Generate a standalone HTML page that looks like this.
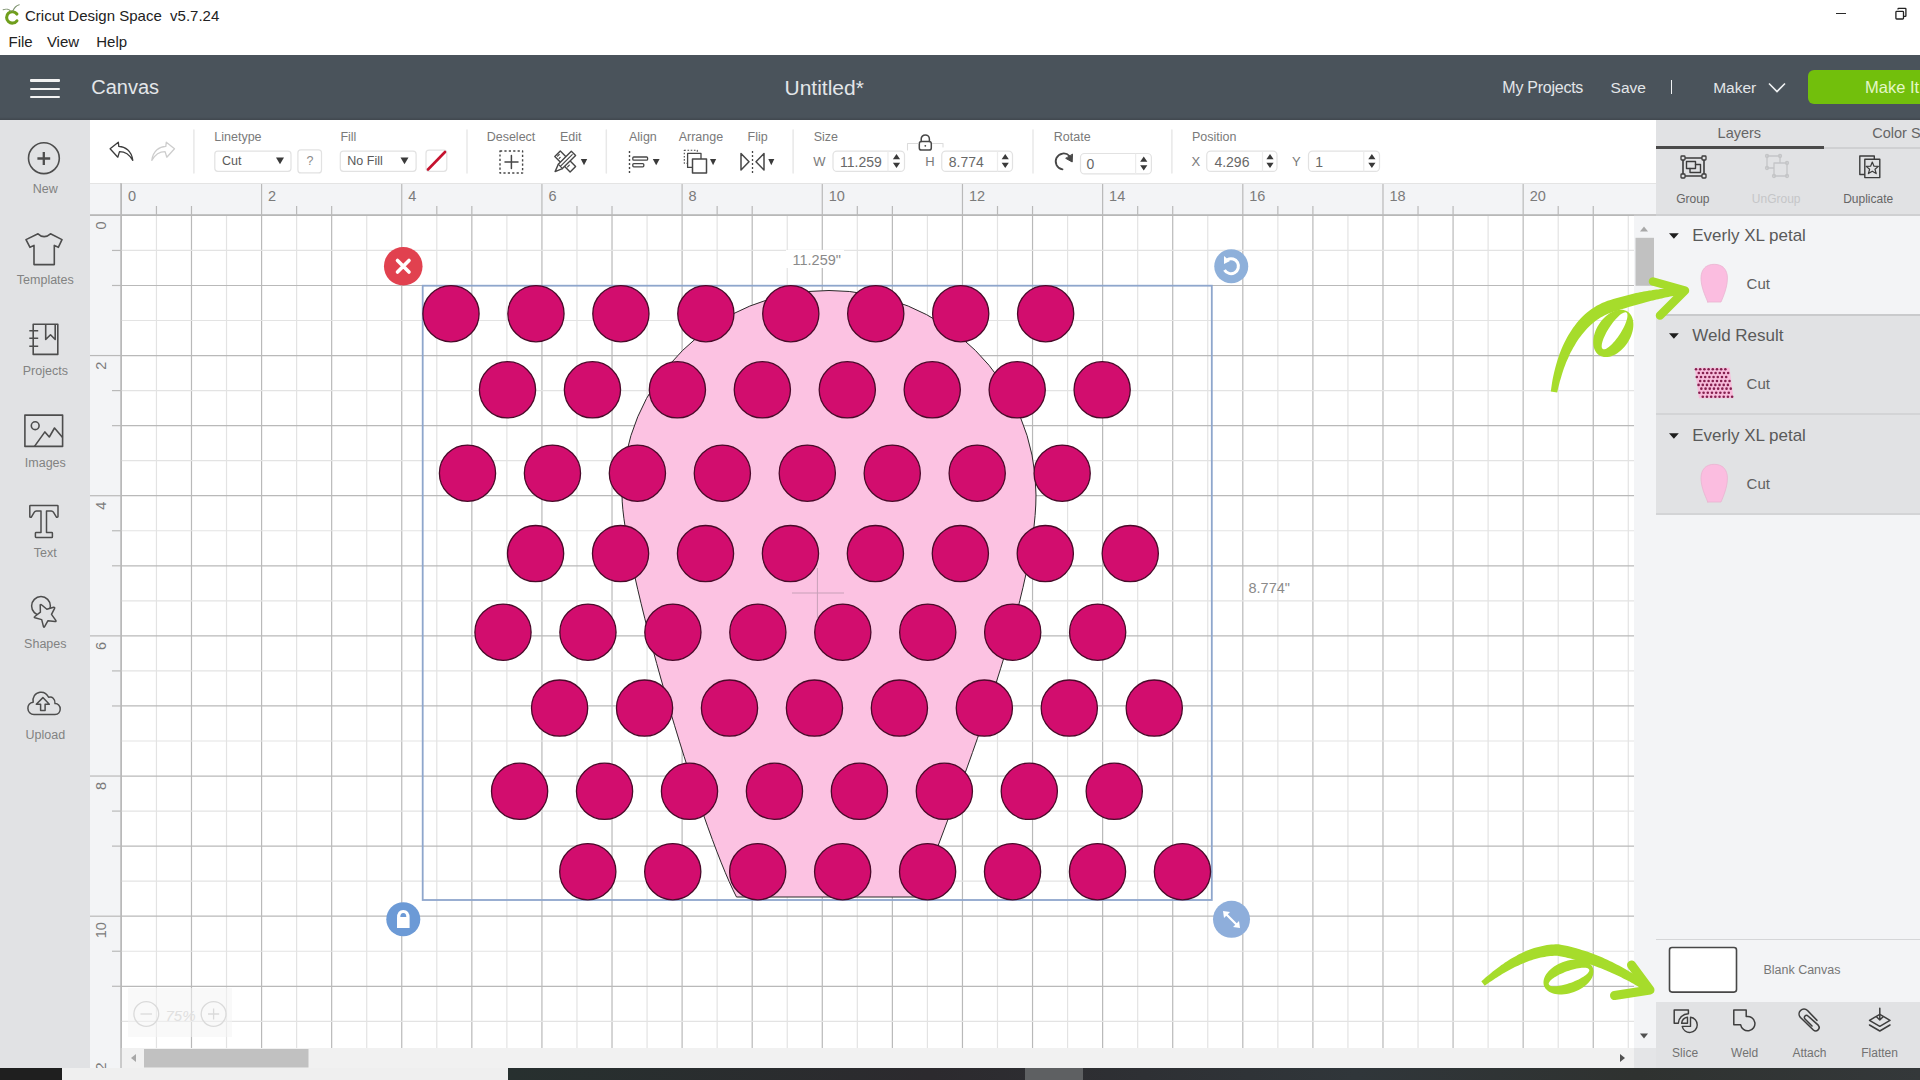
<!DOCTYPE html>
<html><head><meta charset="utf-8"><title>Cricut Design Space</title>
<style>
html,body{margin:0;padding:0;}
body{width:1920px;height:1080px;overflow:hidden;position:relative;background:#fff;font-family:"Liberation Sans",sans-serif;-webkit-font-smoothing:antialiased;}
.t{position:absolute;white-space:nowrap;line-height:1;}
.r{position:absolute;box-sizing:border-box;}
svg{position:absolute;overflow:visible;}
</style></head><body>
<div class="r" style="left:0px;top:55px;width:1920px;height:65px;background:#4a535b"></div>
<div class="r" style="left:0px;top:117px;width:1920px;height:3px;background:linear-gradient(#4a535b,#40474e)"></div>
<div class="r" style="left:0px;top:120px;width:90px;height:948px;background:#e1e2e4"></div>
<div class="r" style="left:90px;top:120px;width:1566px;height:63px;background:#fff"></div>
<div class="r" style="left:90px;top:183px;width:1566px;height:32px;background:#f3f4f6;border-top:1px solid #e4e4e4"></div>
<div class="r" style="left:90px;top:215px;width:31px;height:853px;background:#f3f4f6"></div>
<div class="r" style="left:121px;top:215px;width:1513px;height:833px;background:#fff"></div>
<div class="r" style="left:1634px;top:215px;width:22px;height:833px;background:#f3f4f6"></div>
<div class="r" style="left:121px;top:1048px;width:1535px;height:20px;background:#f1f1f1"></div>
<div class="r" style="left:0px;top:1068px;width:62px;height:12px;background:#1f1f1f"></div>
<div class="r" style="left:62px;top:1068px;width:446px;height:12px;background:#efefef"></div>
<div class="r" style="left:508px;top:1068px;width:1412px;height:12px;background:linear-gradient(90deg,#27302f,#2c2a2e 30%,#30363a 60%,#2f3230 80%,#34383a)"></div>
<div class="r" style="left:1025px;top:1068px;width:58px;height:12px;background:#5e6062"></div>
<div class="r" style="left:1634px;top:1048px;width:22px;height:20px;background:#e4e5e7"></div>
<svg style="left:0;top:0" width="1920" height="1080" viewBox="0 0 1920 1080"><defs><clipPath id="cv"><rect x="90" y="183" width="1566" height="885"/></clipPath></defs><g clip-path="url(#cv)"><line x1="121.40" y1="215" x2="121.40" y2="1048" stroke="#b9b9b9" stroke-width="1.2"/><line x1="156.44" y1="215" x2="156.44" y2="1048" stroke="#e3e3e3" stroke-width="1.2"/><line x1="191.49" y1="215" x2="191.49" y2="1048" stroke="#b9b9b9" stroke-width="1.2"/><line x1="226.53" y1="215" x2="226.53" y2="1048" stroke="#e3e3e3" stroke-width="1.2"/><line x1="261.58" y1="215" x2="261.58" y2="1048" stroke="#b9b9b9" stroke-width="1.2"/><line x1="296.62" y1="215" x2="296.62" y2="1048" stroke="#e3e3e3" stroke-width="1.2"/><line x1="331.66" y1="215" x2="331.66" y2="1048" stroke="#b9b9b9" stroke-width="1.2"/><line x1="366.71" y1="215" x2="366.71" y2="1048" stroke="#e3e3e3" stroke-width="1.2"/><line x1="401.75" y1="215" x2="401.75" y2="1048" stroke="#b9b9b9" stroke-width="1.2"/><line x1="436.80" y1="215" x2="436.80" y2="1048" stroke="#e3e3e3" stroke-width="1.2"/><line x1="471.84" y1="215" x2="471.84" y2="1048" stroke="#b9b9b9" stroke-width="1.2"/><line x1="506.88" y1="215" x2="506.88" y2="1048" stroke="#e3e3e3" stroke-width="1.2"/><line x1="541.93" y1="215" x2="541.93" y2="1048" stroke="#b9b9b9" stroke-width="1.2"/><line x1="576.97" y1="215" x2="576.97" y2="1048" stroke="#e3e3e3" stroke-width="1.2"/><line x1="612.02" y1="215" x2="612.02" y2="1048" stroke="#b9b9b9" stroke-width="1.2"/><line x1="647.06" y1="215" x2="647.06" y2="1048" stroke="#e3e3e3" stroke-width="1.2"/><line x1="682.10" y1="215" x2="682.10" y2="1048" stroke="#b9b9b9" stroke-width="1.2"/><line x1="717.15" y1="215" x2="717.15" y2="1048" stroke="#e3e3e3" stroke-width="1.2"/><line x1="752.19" y1="215" x2="752.19" y2="1048" stroke="#b9b9b9" stroke-width="1.2"/><line x1="787.24" y1="215" x2="787.24" y2="1048" stroke="#e3e3e3" stroke-width="1.2"/><line x1="822.28" y1="215" x2="822.28" y2="1048" stroke="#b9b9b9" stroke-width="1.2"/><line x1="857.32" y1="215" x2="857.32" y2="1048" stroke="#e3e3e3" stroke-width="1.2"/><line x1="892.37" y1="215" x2="892.37" y2="1048" stroke="#b9b9b9" stroke-width="1.2"/><line x1="927.41" y1="215" x2="927.41" y2="1048" stroke="#e3e3e3" stroke-width="1.2"/><line x1="962.46" y1="215" x2="962.46" y2="1048" stroke="#b9b9b9" stroke-width="1.2"/><line x1="997.50" y1="215" x2="997.50" y2="1048" stroke="#e3e3e3" stroke-width="1.2"/><line x1="1032.54" y1="215" x2="1032.54" y2="1048" stroke="#b9b9b9" stroke-width="1.2"/><line x1="1067.59" y1="215" x2="1067.59" y2="1048" stroke="#e3e3e3" stroke-width="1.2"/><line x1="1102.63" y1="215" x2="1102.63" y2="1048" stroke="#b9b9b9" stroke-width="1.2"/><line x1="1137.68" y1="215" x2="1137.68" y2="1048" stroke="#e3e3e3" stroke-width="1.2"/><line x1="1172.72" y1="215" x2="1172.72" y2="1048" stroke="#b9b9b9" stroke-width="1.2"/><line x1="1207.76" y1="215" x2="1207.76" y2="1048" stroke="#e3e3e3" stroke-width="1.2"/><line x1="1242.81" y1="215" x2="1242.81" y2="1048" stroke="#b9b9b9" stroke-width="1.2"/><line x1="1277.85" y1="215" x2="1277.85" y2="1048" stroke="#e3e3e3" stroke-width="1.2"/><line x1="1312.90" y1="215" x2="1312.90" y2="1048" stroke="#b9b9b9" stroke-width="1.2"/><line x1="1347.94" y1="215" x2="1347.94" y2="1048" stroke="#e3e3e3" stroke-width="1.2"/><line x1="1382.98" y1="215" x2="1382.98" y2="1048" stroke="#b9b9b9" stroke-width="1.2"/><line x1="1418.03" y1="215" x2="1418.03" y2="1048" stroke="#e3e3e3" stroke-width="1.2"/><line x1="1453.07" y1="215" x2="1453.07" y2="1048" stroke="#b9b9b9" stroke-width="1.2"/><line x1="1488.12" y1="215" x2="1488.12" y2="1048" stroke="#e3e3e3" stroke-width="1.2"/><line x1="1523.16" y1="215" x2="1523.16" y2="1048" stroke="#b9b9b9" stroke-width="1.2"/><line x1="1558.20" y1="215" x2="1558.20" y2="1048" stroke="#e3e3e3" stroke-width="1.2"/><line x1="1593.25" y1="215" x2="1593.25" y2="1048" stroke="#b9b9b9" stroke-width="1.2"/><line x1="1628.29" y1="215" x2="1628.29" y2="1048" stroke="#e3e3e3" stroke-width="1.2"/><line x1="121" y1="215.40" x2="1634" y2="215.40" stroke="#b9b9b9" stroke-width="1.2"/><line x1="121" y1="250.44" x2="1634" y2="250.44" stroke="#e3e3e3" stroke-width="1.2"/><line x1="121" y1="285.48" x2="1634" y2="285.48" stroke="#b9b9b9" stroke-width="1.2"/><line x1="121" y1="320.52" x2="1634" y2="320.52" stroke="#e3e3e3" stroke-width="1.2"/><line x1="121" y1="355.56" x2="1634" y2="355.56" stroke="#b9b9b9" stroke-width="1.2"/><line x1="121" y1="390.60" x2="1634" y2="390.60" stroke="#e3e3e3" stroke-width="1.2"/><line x1="121" y1="425.64" x2="1634" y2="425.64" stroke="#b9b9b9" stroke-width="1.2"/><line x1="121" y1="460.68" x2="1634" y2="460.68" stroke="#e3e3e3" stroke-width="1.2"/><line x1="121" y1="495.72" x2="1634" y2="495.72" stroke="#b9b9b9" stroke-width="1.2"/><line x1="121" y1="530.76" x2="1634" y2="530.76" stroke="#e3e3e3" stroke-width="1.2"/><line x1="121" y1="565.80" x2="1634" y2="565.80" stroke="#b9b9b9" stroke-width="1.2"/><line x1="121" y1="600.84" x2="1634" y2="600.84" stroke="#e3e3e3" stroke-width="1.2"/><line x1="121" y1="635.88" x2="1634" y2="635.88" stroke="#b9b9b9" stroke-width="1.2"/><line x1="121" y1="670.92" x2="1634" y2="670.92" stroke="#e3e3e3" stroke-width="1.2"/><line x1="121" y1="705.96" x2="1634" y2="705.96" stroke="#b9b9b9" stroke-width="1.2"/><line x1="121" y1="741.00" x2="1634" y2="741.00" stroke="#e3e3e3" stroke-width="1.2"/><line x1="121" y1="776.04" x2="1634" y2="776.04" stroke="#b9b9b9" stroke-width="1.2"/><line x1="121" y1="811.08" x2="1634" y2="811.08" stroke="#e3e3e3" stroke-width="1.2"/><line x1="121" y1="846.12" x2="1634" y2="846.12" stroke="#b9b9b9" stroke-width="1.2"/><line x1="121" y1="881.16" x2="1634" y2="881.16" stroke="#e3e3e3" stroke-width="1.2"/><line x1="121" y1="916.20" x2="1634" y2="916.20" stroke="#b9b9b9" stroke-width="1.2"/><line x1="121" y1="951.24" x2="1634" y2="951.24" stroke="#e3e3e3" stroke-width="1.2"/><line x1="121" y1="986.28" x2="1634" y2="986.28" stroke="#b9b9b9" stroke-width="1.2"/><line x1="121" y1="1021.32" x2="1634" y2="1021.32" stroke="#e3e3e3" stroke-width="1.2"/><line x1="121.40" y1="184" x2="121.40" y2="215" stroke="#b9b9b9" stroke-width="1.2"/><line x1="156.44" y1="206" x2="156.44" y2="215" stroke="#b9b9b9" stroke-width="1.2"/><line x1="191.49" y1="206" x2="191.49" y2="215" stroke="#b9b9b9" stroke-width="1.2"/><line x1="261.58" y1="184" x2="261.58" y2="215" stroke="#b9b9b9" stroke-width="1.2"/><line x1="296.62" y1="206" x2="296.62" y2="215" stroke="#b9b9b9" stroke-width="1.2"/><line x1="331.66" y1="206" x2="331.66" y2="215" stroke="#b9b9b9" stroke-width="1.2"/><line x1="401.75" y1="184" x2="401.75" y2="215" stroke="#b9b9b9" stroke-width="1.2"/><line x1="436.80" y1="206" x2="436.80" y2="215" stroke="#b9b9b9" stroke-width="1.2"/><line x1="471.84" y1="206" x2="471.84" y2="215" stroke="#b9b9b9" stroke-width="1.2"/><line x1="541.93" y1="184" x2="541.93" y2="215" stroke="#b9b9b9" stroke-width="1.2"/><line x1="576.97" y1="206" x2="576.97" y2="215" stroke="#b9b9b9" stroke-width="1.2"/><line x1="612.02" y1="206" x2="612.02" y2="215" stroke="#b9b9b9" stroke-width="1.2"/><line x1="682.10" y1="184" x2="682.10" y2="215" stroke="#b9b9b9" stroke-width="1.2"/><line x1="717.15" y1="206" x2="717.15" y2="215" stroke="#b9b9b9" stroke-width="1.2"/><line x1="752.19" y1="206" x2="752.19" y2="215" stroke="#b9b9b9" stroke-width="1.2"/><line x1="822.28" y1="184" x2="822.28" y2="215" stroke="#b9b9b9" stroke-width="1.2"/><line x1="857.32" y1="206" x2="857.32" y2="215" stroke="#b9b9b9" stroke-width="1.2"/><line x1="892.37" y1="206" x2="892.37" y2="215" stroke="#b9b9b9" stroke-width="1.2"/><line x1="962.46" y1="184" x2="962.46" y2="215" stroke="#b9b9b9" stroke-width="1.2"/><line x1="997.50" y1="206" x2="997.50" y2="215" stroke="#b9b9b9" stroke-width="1.2"/><line x1="1032.54" y1="206" x2="1032.54" y2="215" stroke="#b9b9b9" stroke-width="1.2"/><line x1="1102.63" y1="184" x2="1102.63" y2="215" stroke="#b9b9b9" stroke-width="1.2"/><line x1="1137.68" y1="206" x2="1137.68" y2="215" stroke="#b9b9b9" stroke-width="1.2"/><line x1="1172.72" y1="206" x2="1172.72" y2="215" stroke="#b9b9b9" stroke-width="1.2"/><line x1="1242.81" y1="184" x2="1242.81" y2="215" stroke="#b9b9b9" stroke-width="1.2"/><line x1="1277.85" y1="206" x2="1277.85" y2="215" stroke="#b9b9b9" stroke-width="1.2"/><line x1="1312.90" y1="206" x2="1312.90" y2="215" stroke="#b9b9b9" stroke-width="1.2"/><line x1="1382.98" y1="184" x2="1382.98" y2="215" stroke="#b9b9b9" stroke-width="1.2"/><line x1="1418.03" y1="206" x2="1418.03" y2="215" stroke="#b9b9b9" stroke-width="1.2"/><line x1="1453.07" y1="206" x2="1453.07" y2="215" stroke="#b9b9b9" stroke-width="1.2"/><line x1="1523.16" y1="184" x2="1523.16" y2="215" stroke="#b9b9b9" stroke-width="1.2"/><line x1="1558.20" y1="206" x2="1558.20" y2="215" stroke="#b9b9b9" stroke-width="1.2"/><line x1="1593.25" y1="206" x2="1593.25" y2="215" stroke="#b9b9b9" stroke-width="1.2"/><line x1="90" y1="215.40" x2="121" y2="215.40" stroke="#b9b9b9" stroke-width="1.2"/><line x1="112" y1="250.44" x2="121" y2="250.44" stroke="#b9b9b9" stroke-width="1.2"/><line x1="112" y1="285.48" x2="121" y2="285.48" stroke="#b9b9b9" stroke-width="1.2"/><line x1="90" y1="355.56" x2="121" y2="355.56" stroke="#b9b9b9" stroke-width="1.2"/><line x1="112" y1="390.60" x2="121" y2="390.60" stroke="#b9b9b9" stroke-width="1.2"/><line x1="112" y1="425.64" x2="121" y2="425.64" stroke="#b9b9b9" stroke-width="1.2"/><line x1="90" y1="495.72" x2="121" y2="495.72" stroke="#b9b9b9" stroke-width="1.2"/><line x1="112" y1="530.76" x2="121" y2="530.76" stroke="#b9b9b9" stroke-width="1.2"/><line x1="112" y1="565.80" x2="121" y2="565.80" stroke="#b9b9b9" stroke-width="1.2"/><line x1="90" y1="635.88" x2="121" y2="635.88" stroke="#b9b9b9" stroke-width="1.2"/><line x1="112" y1="670.92" x2="121" y2="670.92" stroke="#b9b9b9" stroke-width="1.2"/><line x1="112" y1="705.96" x2="121" y2="705.96" stroke="#b9b9b9" stroke-width="1.2"/><line x1="90" y1="776.04" x2="121" y2="776.04" stroke="#b9b9b9" stroke-width="1.2"/><line x1="112" y1="811.08" x2="121" y2="811.08" stroke="#b9b9b9" stroke-width="1.2"/><line x1="112" y1="846.12" x2="121" y2="846.12" stroke="#b9b9b9" stroke-width="1.2"/><line x1="90" y1="916.20" x2="121" y2="916.20" stroke="#b9b9b9" stroke-width="1.2"/><line x1="112" y1="951.24" x2="121" y2="951.24" stroke="#b9b9b9" stroke-width="1.2"/><line x1="112" y1="986.28" x2="121" y2="986.28" stroke="#b9b9b9" stroke-width="1.2"/><line x1="90" y1="215" x2="1656" y2="215" stroke="#b9b9b9" stroke-width="1.4"/><line x1="121" y1="183" x2="121" y2="1068" stroke="#b9b9b9" stroke-width="1.4"/><text x="127.9" y="201" font-family="Liberation Sans" font-size="14.5" fill="#7b7b7b">0</text><text x="268.1" y="201" font-family="Liberation Sans" font-size="14.5" fill="#7b7b7b">2</text><text x="408.3" y="201" font-family="Liberation Sans" font-size="14.5" fill="#7b7b7b">4</text><text x="548.4" y="201" font-family="Liberation Sans" font-size="14.5" fill="#7b7b7b">6</text><text x="688.6" y="201" font-family="Liberation Sans" font-size="14.5" fill="#7b7b7b">8</text><text x="828.8" y="201" font-family="Liberation Sans" font-size="14.5" fill="#7b7b7b">10</text><text x="969.0" y="201" font-family="Liberation Sans" font-size="14.5" fill="#7b7b7b">12</text><text x="1109.1" y="201" font-family="Liberation Sans" font-size="14.5" fill="#7b7b7b">14</text><text x="1249.3" y="201" font-family="Liberation Sans" font-size="14.5" fill="#7b7b7b">16</text><text x="1389.5" y="201" font-family="Liberation Sans" font-size="14.5" fill="#7b7b7b">18</text><text x="1529.7" y="201" font-family="Liberation Sans" font-size="14.5" fill="#7b7b7b">20</text><text transform="translate(105.6,221.4) rotate(-90)" text-anchor="end" font-family="Liberation Sans" font-size="14.5" fill="#7b7b7b">0</text><text transform="translate(105.6,361.6) rotate(-90)" text-anchor="end" font-family="Liberation Sans" font-size="14.5" fill="#7b7b7b">2</text><text transform="translate(105.6,501.7) rotate(-90)" text-anchor="end" font-family="Liberation Sans" font-size="14.5" fill="#7b7b7b">4</text><text transform="translate(105.6,641.9) rotate(-90)" text-anchor="end" font-family="Liberation Sans" font-size="14.5" fill="#7b7b7b">6</text><text transform="translate(105.6,782.0) rotate(-90)" text-anchor="end" font-family="Liberation Sans" font-size="14.5" fill="#7b7b7b">8</text><text transform="translate(105.6,922.2) rotate(-90)" text-anchor="end" font-family="Liberation Sans" font-size="14.5" fill="#7b7b7b">10</text><text transform="translate(105.6,1062.4) rotate(-90)" text-anchor="end" font-family="Liberation Sans" font-size="14.5" fill="#7b7b7b">12</text></g><path d="M736.5,897 L918.8,897 C956.6,795.1 1036,599 1036,495 A207,204.5 0 0 0 622,495 C622,562.2 699.7,826.1 736.5,897 Z" fill="#fcc2e2" stroke="#2a2a2a" stroke-width="1"/><line x1="792" y1="593" x2="844" y2="593" stroke="#c8a0b8" stroke-width="1"/><line x1="817.4" y1="568" x2="817.4" y2="618" stroke="#c8a0b8" stroke-width="1"/><rect x="422.7" y="285.7" width="789.1" height="614.3" fill="none" stroke="#8ea6cc" stroke-width="1.8"/><circle cx="451.00" cy="313.70" r="28.1" fill="#d20d6e" stroke="#4a0a2a" stroke-width="1.3"/><circle cx="535.95" cy="313.70" r="28.1" fill="#d20d6e" stroke="#4a0a2a" stroke-width="1.3"/><circle cx="620.90" cy="313.70" r="28.1" fill="#d20d6e" stroke="#4a0a2a" stroke-width="1.3"/><circle cx="705.85" cy="313.70" r="28.1" fill="#d20d6e" stroke="#4a0a2a" stroke-width="1.3"/><circle cx="790.80" cy="313.70" r="28.1" fill="#d20d6e" stroke="#4a0a2a" stroke-width="1.3"/><circle cx="875.75" cy="313.70" r="28.1" fill="#d20d6e" stroke="#4a0a2a" stroke-width="1.3"/><circle cx="960.70" cy="313.70" r="28.1" fill="#d20d6e" stroke="#4a0a2a" stroke-width="1.3"/><circle cx="1045.65" cy="313.70" r="28.1" fill="#d20d6e" stroke="#4a0a2a" stroke-width="1.3"/><circle cx="507.50" cy="389.80" r="28.1" fill="#d20d6e" stroke="#4a0a2a" stroke-width="1.3"/><circle cx="592.45" cy="389.80" r="28.1" fill="#d20d6e" stroke="#4a0a2a" stroke-width="1.3"/><circle cx="677.40" cy="389.80" r="28.1" fill="#d20d6e" stroke="#4a0a2a" stroke-width="1.3"/><circle cx="762.35" cy="389.80" r="28.1" fill="#d20d6e" stroke="#4a0a2a" stroke-width="1.3"/><circle cx="847.30" cy="389.80" r="28.1" fill="#d20d6e" stroke="#4a0a2a" stroke-width="1.3"/><circle cx="932.25" cy="389.80" r="28.1" fill="#d20d6e" stroke="#4a0a2a" stroke-width="1.3"/><circle cx="1017.20" cy="389.80" r="28.1" fill="#d20d6e" stroke="#4a0a2a" stroke-width="1.3"/><circle cx="1102.15" cy="389.80" r="28.1" fill="#d20d6e" stroke="#4a0a2a" stroke-width="1.3"/><circle cx="467.50" cy="473.20" r="28.1" fill="#d20d6e" stroke="#4a0a2a" stroke-width="1.3"/><circle cx="552.45" cy="473.20" r="28.1" fill="#d20d6e" stroke="#4a0a2a" stroke-width="1.3"/><circle cx="637.40" cy="473.20" r="28.1" fill="#d20d6e" stroke="#4a0a2a" stroke-width="1.3"/><circle cx="722.35" cy="473.20" r="28.1" fill="#d20d6e" stroke="#4a0a2a" stroke-width="1.3"/><circle cx="807.30" cy="473.20" r="28.1" fill="#d20d6e" stroke="#4a0a2a" stroke-width="1.3"/><circle cx="892.25" cy="473.20" r="28.1" fill="#d20d6e" stroke="#4a0a2a" stroke-width="1.3"/><circle cx="977.20" cy="473.20" r="28.1" fill="#d20d6e" stroke="#4a0a2a" stroke-width="1.3"/><circle cx="1062.15" cy="473.20" r="28.1" fill="#d20d6e" stroke="#4a0a2a" stroke-width="1.3"/><circle cx="535.60" cy="553.60" r="28.1" fill="#d20d6e" stroke="#4a0a2a" stroke-width="1.3"/><circle cx="620.55" cy="553.60" r="28.1" fill="#d20d6e" stroke="#4a0a2a" stroke-width="1.3"/><circle cx="705.50" cy="553.60" r="28.1" fill="#d20d6e" stroke="#4a0a2a" stroke-width="1.3"/><circle cx="790.45" cy="553.60" r="28.1" fill="#d20d6e" stroke="#4a0a2a" stroke-width="1.3"/><circle cx="875.40" cy="553.60" r="28.1" fill="#d20d6e" stroke="#4a0a2a" stroke-width="1.3"/><circle cx="960.35" cy="553.60" r="28.1" fill="#d20d6e" stroke="#4a0a2a" stroke-width="1.3"/><circle cx="1045.30" cy="553.60" r="28.1" fill="#d20d6e" stroke="#4a0a2a" stroke-width="1.3"/><circle cx="1130.25" cy="553.60" r="28.1" fill="#d20d6e" stroke="#4a0a2a" stroke-width="1.3"/><circle cx="503.00" cy="632.20" r="28.1" fill="#d20d6e" stroke="#4a0a2a" stroke-width="1.3"/><circle cx="587.95" cy="632.20" r="28.1" fill="#d20d6e" stroke="#4a0a2a" stroke-width="1.3"/><circle cx="672.90" cy="632.20" r="28.1" fill="#d20d6e" stroke="#4a0a2a" stroke-width="1.3"/><circle cx="757.85" cy="632.20" r="28.1" fill="#d20d6e" stroke="#4a0a2a" stroke-width="1.3"/><circle cx="842.80" cy="632.20" r="28.1" fill="#d20d6e" stroke="#4a0a2a" stroke-width="1.3"/><circle cx="927.75" cy="632.20" r="28.1" fill="#d20d6e" stroke="#4a0a2a" stroke-width="1.3"/><circle cx="1012.70" cy="632.20" r="28.1" fill="#d20d6e" stroke="#4a0a2a" stroke-width="1.3"/><circle cx="1097.65" cy="632.20" r="28.1" fill="#d20d6e" stroke="#4a0a2a" stroke-width="1.3"/><circle cx="559.60" cy="708.10" r="28.1" fill="#d20d6e" stroke="#4a0a2a" stroke-width="1.3"/><circle cx="644.55" cy="708.10" r="28.1" fill="#d20d6e" stroke="#4a0a2a" stroke-width="1.3"/><circle cx="729.50" cy="708.10" r="28.1" fill="#d20d6e" stroke="#4a0a2a" stroke-width="1.3"/><circle cx="814.45" cy="708.10" r="28.1" fill="#d20d6e" stroke="#4a0a2a" stroke-width="1.3"/><circle cx="899.40" cy="708.10" r="28.1" fill="#d20d6e" stroke="#4a0a2a" stroke-width="1.3"/><circle cx="984.35" cy="708.10" r="28.1" fill="#d20d6e" stroke="#4a0a2a" stroke-width="1.3"/><circle cx="1069.30" cy="708.10" r="28.1" fill="#d20d6e" stroke="#4a0a2a" stroke-width="1.3"/><circle cx="1154.25" cy="708.10" r="28.1" fill="#d20d6e" stroke="#4a0a2a" stroke-width="1.3"/><circle cx="519.60" cy="791.30" r="28.1" fill="#d20d6e" stroke="#4a0a2a" stroke-width="1.3"/><circle cx="604.55" cy="791.30" r="28.1" fill="#d20d6e" stroke="#4a0a2a" stroke-width="1.3"/><circle cx="689.50" cy="791.30" r="28.1" fill="#d20d6e" stroke="#4a0a2a" stroke-width="1.3"/><circle cx="774.45" cy="791.30" r="28.1" fill="#d20d6e" stroke="#4a0a2a" stroke-width="1.3"/><circle cx="859.40" cy="791.30" r="28.1" fill="#d20d6e" stroke="#4a0a2a" stroke-width="1.3"/><circle cx="944.35" cy="791.30" r="28.1" fill="#d20d6e" stroke="#4a0a2a" stroke-width="1.3"/><circle cx="1029.30" cy="791.30" r="28.1" fill="#d20d6e" stroke="#4a0a2a" stroke-width="1.3"/><circle cx="1114.25" cy="791.30" r="28.1" fill="#d20d6e" stroke="#4a0a2a" stroke-width="1.3"/><circle cx="587.80" cy="871.70" r="28.1" fill="#d20d6e" stroke="#4a0a2a" stroke-width="1.3"/><circle cx="672.75" cy="871.70" r="28.1" fill="#d20d6e" stroke="#4a0a2a" stroke-width="1.3"/><circle cx="757.70" cy="871.70" r="28.1" fill="#d20d6e" stroke="#4a0a2a" stroke-width="1.3"/><circle cx="842.65" cy="871.70" r="28.1" fill="#d20d6e" stroke="#4a0a2a" stroke-width="1.3"/><circle cx="927.60" cy="871.70" r="28.1" fill="#d20d6e" stroke="#4a0a2a" stroke-width="1.3"/><circle cx="1012.55" cy="871.70" r="28.1" fill="#d20d6e" stroke="#4a0a2a" stroke-width="1.3"/><circle cx="1097.50" cy="871.70" r="28.1" fill="#d20d6e" stroke="#4a0a2a" stroke-width="1.3"/><circle cx="1182.45" cy="871.70" r="28.1" fill="#d20d6e" stroke="#4a0a2a" stroke-width="1.3"/><rect x="786" y="250" width="58" height="18" fill="#fff"/><text x="792.5" y="264.8" font-family="Liberation Sans" font-size="14.5" fill="#8a8a8a">11.259"</text><text x="1248.5" y="593.3" font-family="Liberation Sans" font-size="14.5" fill="#8a8a8a">8.774"</text><circle cx="403.25" cy="266.25" r="19.3" fill="#e1414f"/><path d="M397.5,260.5 L409,272 M409,260.5 L397.5,272" stroke="#fff" stroke-width="3.6" stroke-linecap="round"/><circle cx="1231.25" cy="266.25" r="17" fill="#8eb0da"/><path d="M1227.5,259.5 A7.5,7.5 0 1 1 1224.5,270" fill="none" stroke="#fff" stroke-width="3"/><path d="M1224,256 L1230,261 L1224,264 Z" fill="#fff"/><circle cx="403.3" cy="919.3" r="17" fill="#6c9ad6"/><path d="M397,928 L397,918 Q397,910 403.3,910 Q409.6,910 409.6,918 L409.6,928 Z" fill="#fff"/><path d="M400.3,917 Q400.3,913 403.3,913 Q406.3,913 406.3,917 Z" fill="#6c9ad6"/><circle cx="1231.5" cy="919.3" r="18.5" fill="#8eaedb"/><path d="M1225,913 L1238,926" stroke="#fff" stroke-width="2.2"/><path d="M1223,911 L1230,912 L1224,918 Z M1240,928 L1233,927 L1239,921 Z" fill="#fff"/></svg>
<svg style="left:0;top:0" width="24" height="28" viewBox="0 0 24 28"><path d="M16.9,14.0 A5.7,5.7 0 1 0 16.9,20.8" fill="none" stroke="#6f9e1c" stroke-width="3.1" stroke-linecap="round"/><path d="M10.6,11.2 C9.3,9.4 6,8.6 3.2,9.7 M12.8,11.2 C14,8 16,5.6 19.2,4.7" fill="none" stroke="#7f9470" stroke-width="1.1" stroke-linecap="round"/></svg>
<div class="t" style="left:25.00px;top:7.90px;font-size:15px;color:#222;">Cricut Design Space&nbsp;&nbsp;v5.7.24</div>
<div class="t" style="left:8.50px;top:34.20px;font-size:15px;color:#222;">File</div>
<div class="t" style="left:46.90px;top:34.20px;font-size:15px;color:#222;">View</div>
<div class="t" style="left:96.25px;top:34.20px;font-size:15px;color:#222;">Help</div>
<div class="r" style="left:1836px;top:13.2px;width:10px;height:1.200000000000001px;background:#2a2a2a"></div>
<svg style="left:1890px;top:5px" width="24" height="20" viewBox="0 0 24 20"><rect x="5.9" y="6.4" width="7.6" height="7.6" rx="0.8" fill="none" stroke="#222" stroke-width="1.3"/><path d="M8,4.4 V3.9 Q8,3.3 8.6,3.3 H15.3 Q15.9,3.3 15.9,3.9 V10.7 Q15.9,11.3 15.3,11.3 H13.5" fill="none" stroke="#222" stroke-width="1.3"/></svg>
<div class="r" style="left:30px;top:79.35px;width:30px;height:2.5px;background:#f2f2f2;border-radius:1px"></div>
<div class="r" style="left:30px;top:87.5px;width:30px;height:2.5px;background:#f2f2f2;border-radius:1px"></div>
<div class="r" style="left:30px;top:95.65px;width:30px;height:2.5px;background:#f2f2f2;border-radius:1px"></div>
<div class="t" style="left:91.25px;top:77.47px;font-size:20px;color:#e3e6e9;">Canvas</div>
<div class="t" style="left:784.50px;top:76.52px;font-size:21px;color:#e3e6e9;">Untitled*</div>
<div class="t" style="left:1502.30px;top:80.06px;font-size:16px;color:#e3e6e9;letter-spacing:-0.25px">My Projects</div>
<div class="t" style="left:1610.60px;top:80.48px;font-size:15.5px;color:#e3e6e9;">Save</div>
<div class="r" style="left:1670.5px;top:80px;width:1.5px;height:14px;background:#f0f2f4"></div>
<div class="t" style="left:1713.20px;top:80.48px;font-size:15.5px;color:#e3e6e9;">Maker</div>
<svg style="left:1766px;top:80px" width="22" height="14" viewBox="0 0 22 14"><path d="M3,3.5 L11,11.5 L19,3.5" fill="none" stroke="#f0f2f4" stroke-width="1.6"/></svg>
<div class="r" style="left:1808.3px;top:69.9px;width:131.70000000000005px;height:34.39999999999999px;background:#72bf0c;border-radius:6px"></div>
<div class="t" style="left:1865.00px;top:79.23px;font-size:16.5px;color:#e4f7c8;">Make It</div>
<svg style="left:0;top:0" width="90" height="1080" viewBox="0 0 90 1080" fill="none" stroke="#4d4d4d" stroke-width="1.6" stroke-linejoin="round"><circle cx="43.9" cy="158.2" r="15.4"/><path d="M37.4,158.5 H50.2 M43.8,152.1 V164.9" stroke-width="2.3"/><path d="M38,233.8 Q44,239.5 50.5,233.8 L62,239.6 L58.3,247.3 L54.3,245.4 L54.3,264.6 L34,264.6 L34,245.4 L30,247.3 L26,239.6 Z"/><rect x="33.2" y="324.2" width="24.6" height="30.2"/><path d="M45.7,324.2 V339.5 L50.5,334.8 L55.2,339.5 V324.2"/><path d="M29.3,330.8 H38.2 M29.3,338.3 H38.2 M29.3,346.3 H38.2"/><rect x="24.9" y="415.1" width="37.7" height="31.3"/><circle cx="35.2" cy="425.7" r="3.9"/><path d="M34.5,446.4 L44.9,431.9 L49.3,437 L54.5,428 L62.6,437.6"/><path d="M30.4,505.5 H57.4 Q58,505.5 58,506.1 V516.6 Q58,517.3 57.3,517.3 H56.6 L53.4,512.2 Q52.6,510.9 51.2,510.9 H46.5 V532.6 H51.7 Q52.4,532.6 52.4,533.3 V536.9 Q52.4,537.4 51.8,537.4 H36 Q35.4,537.4 35.4,536.8 V533.3 Q35.4,532.6 36.1,532.6 H41 V510.9 H36.4 Q35,510.9 34.3,512.2 L31.2,517.3 H30.4 Q29.8,517.3 29.8,516.7 V506.1 Q29.8,505.5 30.4,505.5 Z" stroke-width="1.5"/><circle cx="41" cy="606" r="9.4" stroke-width="1.5"/><path d="M40.2,604.8 Q41,604.2 41.8,605 L46.85,609.3 L53.6,607.2 Q55,607 54.6,608.4 L51.5,614.4 L55.8,620.4 Q56.5,621.8 55,621.6 L48,620.7 L44.6,626.6 Q43.9,627.8 43.4,626.4 L41.7,619.6 L35,617.8 Q33.6,617.3 34.8,616.5 L40.4,612.2 Z" fill="#e1e2e4" stroke-width="1.5"/><path d="M34,714.5 H55 C58.5,714.5 60.2,711.8 60.2,709 C60.2,705.8 57.8,703.4 55,703.6 C55.3,698.8 52,696.2 48.6,697.3 C47,693.7 43.6,691.8 40,692.2 C35,692.8 32.3,697.5 33.2,702.2 C29.8,702.6 27.8,705.4 27.9,708.5 C28,711.8 30.5,714.5 34,714.5 Z" stroke-width="1.5"/><path d="M40.6,710.4 V704.3 H36.3 L42.9,697.6 L49.3,704.3 H45.1 V710.4 Z" stroke-width="1.5"/></svg>
<div class="t" style="left:-154.70px;width:400px;text-align:center;top:183.22px;font-size:12.5px;color:#828282;">New</div>
<div class="t" style="left:-154.70px;width:400px;text-align:center;top:274.42px;font-size:12.5px;color:#828282;">Templates</div>
<div class="t" style="left:-154.70px;width:400px;text-align:center;top:365.42px;font-size:12.5px;color:#828282;">Projects</div>
<div class="t" style="left:-154.70px;width:400px;text-align:center;top:456.62px;font-size:12.5px;color:#828282;">Images</div>
<div class="t" style="left:-154.70px;width:400px;text-align:center;top:546.92px;font-size:12.5px;color:#828282;">Text</div>
<div class="t" style="left:-154.70px;width:400px;text-align:center;top:637.92px;font-size:12.5px;color:#828282;">Shapes</div>
<div class="t" style="left:-154.70px;width:400px;text-align:center;top:728.62px;font-size:12.5px;color:#828282;">Upload</div>
<svg style="left:0;top:0" width="1656" height="183" viewBox="0 0 1656 183" fill="none" stroke="#474747" stroke-width="1.6" stroke-linejoin="round" stroke-linecap="round"><path d="M110.1,148.8 L118.3,142.2 L118.8,146.4 C125,146.6 131.5,150.5 132.8,160.4 C129.5,154.5 125,151.6 119.5,151.6 L117.8,157.2 Z" stroke="#3c3c3c" stroke-width="1.3"/><path d="M174.5,148.8 L166.3,142.2 L165.8,146.4 C159.6,146.6 153.1,150.5 151.8,160.4 C155.1,154.5 159.6,151.6 165.1,151.6 L166.8,157.2 Z" stroke="#cdcdcd" stroke-width="1.3"/><line x1="193.9" y1="130" x2="193.9" y2="173" stroke="#e8e8e8" stroke-width="1.5"/><line x1="467" y1="130" x2="467" y2="173" stroke="#e8e8e8" stroke-width="1.5"/><line x1="606.3" y1="130" x2="606.3" y2="173" stroke="#e8e8e8" stroke-width="1.5"/><line x1="793.1" y1="130" x2="793.1" y2="173" stroke="#e8e8e8" stroke-width="1.5"/><line x1="1033" y1="130" x2="1033" y2="173" stroke="#e8e8e8" stroke-width="1.5"/><line x1="1171.9" y1="130" x2="1171.9" y2="173" stroke="#e8e8e8" stroke-width="1.5"/><rect x="214.8" y="151.2" width="76.19999999999999" height="20.100000000000023" rx="3" stroke="#e2e2e2" stroke-width="1.2" fill="#fff"/><rect x="297.9" y="149.8" width="23.600000000000023" height="23.099999999999994" rx="3" stroke="#e2e2e2" stroke-width="1.2" fill="#fff"/><rect x="340.3" y="151.2" width="75.80000000000001" height="20.100000000000023" rx="3" stroke="#e2e2e2" stroke-width="1.2" fill="#fff"/><rect x="426.0" y="150.2" width="20.80000000000001" height="21.100000000000023" rx="3" stroke="#e2e2e2" stroke-width="1.2" fill="#fff"/><line x1="428" y1="169.5" x2="445" y2="152" stroke="#c5122e" stroke-width="2.6"/><path d="M276,157.6 L284,157.6 L280.0,164.3 Z" fill="#3a3a3a" stroke="none"/><path d="M400.5,157.6 L408.5,157.6 L404.5,164.3 Z" fill="#3a3a3a" stroke="none"/><rect x="500" y="151" width="22.6" height="22" stroke-dasharray="2.2,2.2" stroke-width="1.4" stroke-linecap="butt"/><path d="M511.4,155.5 V168.5 M505,162 H518" stroke-width="1.5"/><path d="M554.8,156.6 L560.3,151.1 L575.6,166.4 L570.1,171.9 Z" stroke-width="1.4"/><path d="M557.5,156.2 L559.2,154.5 M559.2,158.4 L560.2,157.4 M565.5,164.6 L566.8,163.3 M567.6,166.9 L569.3,165.2" stroke-width="1.2"/><path d="M555.1,171.6 L558.3,164.2 L571.3,151.2 L575.6,155.5 L562.4,168.6 Z" fill="#fff" stroke-width="1.4"/><path d="M560.6,166.2 L572.2,154.6 M558.3,164.2 L562.4,168.6" stroke-width="1.2"/><path d="M580.8,159 L587.2,159 L584.0,165.2 Z" fill="#3a3a3a" stroke="none"/><line x1="629.5" y1="151" x2="629.5" y2="173" stroke-dasharray="2,2" stroke-width="1.4" stroke-linecap="butt"/><rect x="632.8" y="157" width="14.8" height="3.2" rx="1" stroke-width="1.3"/><rect x="632.8" y="163.6" width="11" height="3.2" rx="1" stroke-width="1.3"/><path d="M652.8,159 L659.6,159 L656.2,165.2 Z" fill="#3a3a3a" stroke="none"/><rect x="684.3" y="150.3" width="13" height="13" stroke-dasharray="1.6,1.6" stroke-width="1.1" stroke-linecap="butt"/><rect x="687.6" y="153.4" width="13.4" height="14" stroke-width="1.3" fill="#fff"/><rect x="692.5" y="159" width="14" height="14" stroke-width="1.5" fill="#fff"/><path d="M710,159 L716.2,159 L713.1,165.2 Z" fill="#3a3a3a" stroke="none"/><path d="M741,153.5 L749,161.8 L741,170 Z M764,153.5 L756,161.8 L764,170 Z" stroke-width="1.5"/><line x1="752.5" y1="151" x2="752.5" y2="173" stroke-dasharray="2,2" stroke-width="1.3" stroke-linecap="butt"/><path d="M768.3,159 L774.3,159 L771.3,165.2 Z" fill="#3a3a3a" stroke="none"/><rect x="833.0" y="151.1" width="71.5" height="20.30000000000001" rx="4" stroke="#e2e2e2" stroke-width="1.2" fill="#fff"/><line x1="888" y1="151.6" x2="888" y2="170.9" stroke="#ececec" stroke-width="1.2"/><path d="M892.9,159.25 L900.1,159.25 L896.5,154.05 Z M892.9,162.85 L900.1,162.85 L896.5,168.05 Z" fill="#3a3a3a" stroke="none"/><rect x="941.75" y="151.1" width="70.75" height="20.30000000000001" rx="4" stroke="#e2e2e2" stroke-width="1.2" fill="#fff"/><line x1="997.5" y1="151.6" x2="997.5" y2="170.9" stroke="#ececec" stroke-width="1.2"/><path d="M1001.65,159.25 L1008.85,159.25 L1005.25,154.05 Z M1001.65,162.85 L1008.85,162.85 L1005.25,168.05 Z" fill="#3a3a3a" stroke="none"/><rect x="1080.5" y="153.5" width="70.90000000000009" height="20.400000000000006" rx="4" stroke="#e2e2e2" stroke-width="1.2" fill="#fff"/><line x1="1135.6" y1="154" x2="1135.6" y2="173.4" stroke="#ececec" stroke-width="1.2"/><path d="M1140.15,161.7 L1147.35,161.7 L1143.75,156.5 Z M1140.15,165.29999999999998 L1147.35,165.29999999999998 L1143.75,170.5 Z" fill="#3a3a3a" stroke="none"/><rect x="1206.75" y="151.1" width="70.25" height="20.30000000000001" rx="4" stroke="#e2e2e2" stroke-width="1.2" fill="#fff"/><line x1="1262.5" y1="151.6" x2="1262.5" y2="170.9" stroke="#ececec" stroke-width="1.2"/><path d="M1266.4,159.25 L1273.6,159.25 L1270.0,154.05 Z M1266.4,162.85 L1273.6,162.85 L1270.0,168.05 Z" fill="#3a3a3a" stroke="none"/><rect x="1308.5" y="151.1" width="71" height="20.30000000000001" rx="4" stroke="#e2e2e2" stroke-width="1.2" fill="#fff"/><line x1="1363.75" y1="151.6" x2="1363.75" y2="170.9" stroke="#ececec" stroke-width="1.2"/><path d="M1368.275,159.25 L1375.475,159.25 L1371.875,154.05 Z M1368.275,162.85 L1375.475,162.85 L1371.875,168.05 Z" fill="#3a3a3a" stroke="none"/><path d="M921.2,141.5 V139 A4.1,4.1 0 0 1 929.4,139 V141.5" stroke-width="1.5"/><rect x="919.3" y="141.5" width="12" height="8.6" rx="2.2" stroke-width="1.5"/><circle cx="925.3" cy="145.8" r="0.9" fill="#474747" stroke="none"/><path d="M907.5,150 V143.5 H918 M932.5,143.5 H943 V147" stroke="#dcdcdc" stroke-width="1.1"/><path d="M1069.5,156 A8,8 0 1 0 1062.5,169.4" stroke-width="1.8"/><path d="M1066,158.5 L1072.2,162 L1072.5,154.5 Z" fill="#474747" stroke-width="1"/></svg>
<div class="t" style="left:214.30px;top:130.82px;font-size:12.5px;color:#7a7a7a;">Linetype</div>
<div class="t" style="left:340.40px;top:130.82px;font-size:12.5px;color:#7a7a7a;">Fill</div>
<div class="t" style="left:222.00px;top:155.22px;font-size:12.5px;color:#5a5a5a;">Cut</div>
<div class="t" style="left:306.50px;top:155.22px;font-size:12.5px;color:#8a8a8a;">?</div>
<div class="t" style="left:347.30px;top:155.22px;font-size:12.5px;color:#5a5a5a;">No Fill</div>
<div class="t" style="left:486.70px;top:131.02px;font-size:12.5px;color:#7a7a7a;">Deselect</div>
<div class="t" style="left:560.00px;top:131.02px;font-size:12.5px;color:#7a7a7a;">Edit</div>
<div class="t" style="left:629.00px;top:131.02px;font-size:12.5px;color:#7a7a7a;">Align</div>
<div class="t" style="left:678.70px;top:131.02px;font-size:12.5px;color:#7a7a7a;">Arrange</div>
<div class="t" style="left:747.50px;top:131.02px;font-size:12.5px;color:#7a7a7a;">Flip</div>
<div class="t" style="left:813.75px;top:131.02px;font-size:12.5px;color:#7a7a7a;">Size</div>
<div class="t" style="left:813.20px;top:154.80px;font-size:13px;color:#7a7a7a;">W</div>
<div class="t" style="left:840.00px;top:154.65px;font-size:14px;color:#686868;">11.259</div>
<div class="t" style="left:925.20px;top:154.80px;font-size:13px;color:#7a7a7a;">H</div>
<div class="t" style="left:948.75px;top:154.65px;font-size:14px;color:#686868;">8.774</div>
<div class="t" style="left:1053.75px;top:131.02px;font-size:12.5px;color:#7a7a7a;">Rotate</div>
<div class="t" style="left:1086.60px;top:156.95px;font-size:14px;color:#686868;">0</div>
<div class="t" style="left:1191.90px;top:131.02px;font-size:12.5px;color:#7a7a7a;">Position</div>
<div class="t" style="left:1191.50px;top:154.80px;font-size:13px;color:#7a7a7a;">X</div>
<div class="t" style="left:1214.40px;top:154.65px;font-size:14px;color:#686868;">4.296</div>
<div class="t" style="left:1292.00px;top:154.80px;font-size:13px;color:#7a7a7a;">Y</div>
<div class="t" style="left:1315.20px;top:154.65px;font-size:14px;color:#686868;">1</div>
<div class="r" style="left:1656px;top:120px;width:264px;height:948px;background:#e1e2e4"></div>
<div class="r" style="left:1656px;top:146px;width:168px;height:2.5px;background:#4a4a4a"></div>
<div class="r" style="left:1824px;top:146.5px;width:96px;height:2.0px;background:#cfd0d2"></div>
<div class="t" style="left:1717.60px;top:126.13px;font-size:14.5px;color:#666;">Layers</div>
<div class="t" style="left:1872.30px;top:126.13px;font-size:14.5px;color:#666;">Color Sync</div>
<div class="r" style="left:1656px;top:213.5px;width:264px;height:2.0px;background:#cfd0d2"></div>
<div class="r" style="left:1656px;top:215.5px;width:264px;height:98.5px;background:#f3f4f6"></div>
<div class="r" style="left:1656px;top:314px;width:264px;height:2px;background:#c9cacc"></div>
<div class="r" style="left:1656px;top:413px;width:264px;height:2px;background:#d3d4d6"></div>
<div class="r" style="left:1656px;top:513px;width:264px;height:2px;background:#d3d4d6"></div>
<div class="r" style="left:1656px;top:515px;width:264px;height:423.5px;background:#f3f4f6"></div>
<div class="r" style="left:1656px;top:938.5px;width:264px;height:1.5px;background:#d5d6d8"></div>
<div class="r" style="left:1656px;top:940px;width:264px;height:62px;background:#f3f4f6"></div>
<svg style="left:0;top:0" width="1920" height="1080" viewBox="0 0 1920 1080" fill="none" stroke="#3c3c3c" stroke-width="1.5" stroke-linejoin="round" stroke-linecap="round"><rect x="1683" y="158" width="21" height="18" stroke-width="1.6"/><rect x="1681" y="156" width="4" height="4" rx="0.8" fill="#e1e2e4" stroke-width="1.3"/><rect x="1702" y="156" width="4" height="4" rx="0.8" fill="#e1e2e4" stroke-width="1.3"/><rect x="1681" y="174" width="4" height="4" rx="0.8" fill="#e1e2e4" stroke-width="1.3"/><rect x="1702" y="174" width="4" height="4" rx="0.8" fill="#e1e2e4" stroke-width="1.3"/><rect x="1686.5" y="161.5" width="9" height="7" stroke-width="1.4"/><path d="M1695.5,164.5 H1700.5 V172.5 H1690 V168.5" stroke-width="1.4"/><g stroke="#c4c5c7" stroke-width="1.3"><rect x="1767" y="156" width="13" height="12"/><rect x="1774" y="163" width="13" height="13" fill="#e1e2e4"/><circle cx="1767" cy="156" r="1.5"/><circle cx="1780" cy="156" r="1.5"/><circle cx="1767" cy="168" r="1.5"/><circle cx="1774" cy="176" r="1.5"/><circle cx="1787" cy="163" r="1.5"/><circle cx="1787" cy="176" r="1.5"/></g><rect x="1859.8" y="156" width="14.5" height="18.5" stroke-width="1.4"/><rect x="1864.8" y="159.3" width="15" height="18.3" fill="#e1e2e4" stroke-width="1.4"/><path d="M1872.3,162 L1874,166.2 L1878.4,166.4 L1875,169.3 L1876.2,173.6 L1872.3,171.2 L1868.4,173.6 L1869.6,169.3 L1866.2,166.4 L1870.6,166.2 Z" stroke-width="1.2"/><path d="M1669,233.2 L1678.8,233.2 L1673.9,238.79999999999998 Z" fill="#1e1e1e" stroke="none"/><path d="M1669,333.2 L1678.8,333.2 L1673.9,338.8 Z" fill="#1e1e1e" stroke="none"/><path d="M1669,433.2 L1678.8,433.2 L1673.9,438.8 Z" fill="#1e1e1e" stroke="none"/><path d="M1707.8,302 L1721,302 C1724.5,294 1727.4,286 1727.4,278 C1727.4,269.5 1722.5,264.3 1714.2,264.3 C1706,264.3 1701,269.5 1701,278 C1701,286 1704.3,294 1707.8,302 Z" fill="#fbbde0" stroke="#eab4d0" stroke-width="0.8"/><path d="M1707.8,502 L1721,502 C1724.5,494 1727.4,486 1727.4,478 C1727.4,469.5 1722.5,464.3 1714.2,464.3 C1706,464.3 1701,469.5 1701,478 C1701,486 1704.3,494 1707.8,502 Z" fill="#fbbde0" stroke="#eab4d0" stroke-width="0.8"/><g><path d="M1694.6,367.8 L1729.5,367.8 L1733.5,398.3 L1699,398.3 Z" fill="#f7bddb" stroke="none"/><circle cx="1696.01" cy="369.19" r="1.3" fill="#85204f" stroke="none"/><circle cx="1700.20" cy="369.19" r="1.3" fill="#85204f" stroke="none"/><circle cx="1704.39" cy="369.19" r="1.3" fill="#85204f" stroke="none"/><circle cx="1708.59" cy="369.19" r="1.3" fill="#85204f" stroke="none"/><circle cx="1712.78" cy="369.19" r="1.3" fill="#85204f" stroke="none"/><circle cx="1716.97" cy="369.19" r="1.3" fill="#85204f" stroke="none"/><circle cx="1721.17" cy="369.19" r="1.3" fill="#85204f" stroke="none"/><circle cx="1725.36" cy="369.19" r="1.3" fill="#85204f" stroke="none"/><circle cx="1698.80" cy="372.95" r="1.3" fill="#85204f" stroke="none"/><circle cx="1702.99" cy="372.95" r="1.3" fill="#85204f" stroke="none"/><circle cx="1707.18" cy="372.95" r="1.3" fill="#85204f" stroke="none"/><circle cx="1711.38" cy="372.95" r="1.3" fill="#85204f" stroke="none"/><circle cx="1715.57" cy="372.95" r="1.3" fill="#85204f" stroke="none"/><circle cx="1719.76" cy="372.95" r="1.3" fill="#85204f" stroke="none"/><circle cx="1723.96" cy="372.95" r="1.3" fill="#85204f" stroke="none"/><circle cx="1728.15" cy="372.95" r="1.3" fill="#85204f" stroke="none"/><circle cx="1696.82" cy="377.07" r="1.3" fill="#85204f" stroke="none"/><circle cx="1701.01" cy="377.07" r="1.3" fill="#85204f" stroke="none"/><circle cx="1705.21" cy="377.07" r="1.3" fill="#85204f" stroke="none"/><circle cx="1709.40" cy="377.07" r="1.3" fill="#85204f" stroke="none"/><circle cx="1713.59" cy="377.07" r="1.3" fill="#85204f" stroke="none"/><circle cx="1717.79" cy="377.07" r="1.3" fill="#85204f" stroke="none"/><circle cx="1721.98" cy="377.07" r="1.3" fill="#85204f" stroke="none"/><circle cx="1726.17" cy="377.07" r="1.3" fill="#85204f" stroke="none"/><circle cx="1700.18" cy="381.04" r="1.3" fill="#85204f" stroke="none"/><circle cx="1704.38" cy="381.04" r="1.3" fill="#85204f" stroke="none"/><circle cx="1708.57" cy="381.04" r="1.3" fill="#85204f" stroke="none"/><circle cx="1712.76" cy="381.04" r="1.3" fill="#85204f" stroke="none"/><circle cx="1716.96" cy="381.04" r="1.3" fill="#85204f" stroke="none"/><circle cx="1721.15" cy="381.04" r="1.3" fill="#85204f" stroke="none"/><circle cx="1725.34" cy="381.04" r="1.3" fill="#85204f" stroke="none"/><circle cx="1729.54" cy="381.04" r="1.3" fill="#85204f" stroke="none"/><circle cx="1698.57" cy="384.92" r="1.3" fill="#85204f" stroke="none"/><circle cx="1702.77" cy="384.92" r="1.3" fill="#85204f" stroke="none"/><circle cx="1706.96" cy="384.92" r="1.3" fill="#85204f" stroke="none"/><circle cx="1711.15" cy="384.92" r="1.3" fill="#85204f" stroke="none"/><circle cx="1715.35" cy="384.92" r="1.3" fill="#85204f" stroke="none"/><circle cx="1719.54" cy="384.92" r="1.3" fill="#85204f" stroke="none"/><circle cx="1723.73" cy="384.92" r="1.3" fill="#85204f" stroke="none"/><circle cx="1727.93" cy="384.92" r="1.3" fill="#85204f" stroke="none"/><circle cx="1701.37" cy="388.66" r="1.3" fill="#85204f" stroke="none"/><circle cx="1705.56" cy="388.66" r="1.3" fill="#85204f" stroke="none"/><circle cx="1709.75" cy="388.66" r="1.3" fill="#85204f" stroke="none"/><circle cx="1713.95" cy="388.66" r="1.3" fill="#85204f" stroke="none"/><circle cx="1718.14" cy="388.66" r="1.3" fill="#85204f" stroke="none"/><circle cx="1722.33" cy="388.66" r="1.3" fill="#85204f" stroke="none"/><circle cx="1726.53" cy="388.66" r="1.3" fill="#85204f" stroke="none"/><circle cx="1730.72" cy="388.66" r="1.3" fill="#85204f" stroke="none"/><circle cx="1699.39" cy="392.77" r="1.3" fill="#85204f" stroke="none"/><circle cx="1703.59" cy="392.77" r="1.3" fill="#85204f" stroke="none"/><circle cx="1707.78" cy="392.77" r="1.3" fill="#85204f" stroke="none"/><circle cx="1711.97" cy="392.77" r="1.3" fill="#85204f" stroke="none"/><circle cx="1716.17" cy="392.77" r="1.3" fill="#85204f" stroke="none"/><circle cx="1720.36" cy="392.77" r="1.3" fill="#85204f" stroke="none"/><circle cx="1724.55" cy="392.77" r="1.3" fill="#85204f" stroke="none"/><circle cx="1728.75" cy="392.77" r="1.3" fill="#85204f" stroke="none"/><circle cx="1702.76" cy="396.74" r="1.3" fill="#85204f" stroke="none"/><circle cx="1706.95" cy="396.74" r="1.3" fill="#85204f" stroke="none"/><circle cx="1711.15" cy="396.74" r="1.3" fill="#85204f" stroke="none"/><circle cx="1715.34" cy="396.74" r="1.3" fill="#85204f" stroke="none"/><circle cx="1719.53" cy="396.74" r="1.3" fill="#85204f" stroke="none"/><circle cx="1723.73" cy="396.74" r="1.3" fill="#85204f" stroke="none"/><circle cx="1727.92" cy="396.74" r="1.3" fill="#85204f" stroke="none"/><circle cx="1732.11" cy="396.74" r="1.3" fill="#85204f" stroke="none"/></g><rect x="1669.5" y="947.5" width="67" height="44.6" rx="2.5" fill="#fff" stroke="#474747" stroke-width="1.6"/></svg>
<div class="t" style="left:1676.20px;top:192.84px;font-size:12px;color:#666;">Group</div>
<div class="t" style="left:1751.80px;top:192.84px;font-size:12px;color:#c5c6c8;">UnGroup</div>
<div class="t" style="left:1843.20px;top:192.84px;font-size:12px;color:#666;">Duplicate</div>
<div class="t" style="left:1692.20px;top:226.61px;font-size:17px;color:#5a5a5a;">Everly XL petal</div>
<div class="t" style="left:1692.20px;top:326.61px;font-size:17px;color:#5a5a5a;">Weld Result</div>
<div class="t" style="left:1692.20px;top:426.61px;font-size:17px;color:#5a5a5a;">Everly XL petal</div>
<div class="t" style="left:1746.60px;top:276.05px;font-size:15px;color:#616161;">Cut</div>
<div class="t" style="left:1746.60px;top:376.05px;font-size:15px;color:#616161;">Cut</div>
<div class="t" style="left:1746.60px;top:476.05px;font-size:15px;color:#616161;">Cut</div>
<div class="t" style="left:1763.40px;top:963.72px;font-size:12.5px;color:#777;">Blank Canvas</div>
<div class="r" style="left:1656px;top:1002px;width:264px;height:66px;background:#e1e2e4"></div>
<svg style="left:0;top:0" width="1920" height="1080" viewBox="0 0 1920 1080" fill="none" stroke="#3e3e3e" stroke-width="1.5" stroke-linejoin="round" stroke-linecap="round"><path d="M1674.2,1009.9 H1688.4 V1013.8 A10,10 0 0 0 1678.3,1023.3 H1674.2 Z" stroke-width="1.5"/><path d="M1681.6,1023.3 H1687.5 V1017.3 A7,7 0 0 0 1681.6,1023.3 Z" stroke-width="1.4"/><path d="M1690.5,1017.3 V1026.4 H1682.2 A7.6,7.6 0 1 0 1690.5,1017.3 Z" stroke-width="1.4"/><path d="M1733.8,1010 H1746.2 V1016.6 A7.2,7.2 0 1 1 1740.6,1024.7 H1733.8 Z"/><path d="M1816.9,1020.3 L1807.5,1010.5 A4.95,4.95 0 0 0 1800.5,1017.5 L1813.4,1030 A3.4,3.4 0 0 0 1818.2,1025.2 L1808,1016 A2.12,2.12 0 0 0 1805,1019 L1812,1026" stroke-width="1.6"/><path d="M1869.5,1020.3 L1879.8,1014.3 L1890,1020.3 L1879.8,1026.3 Z"/><path d="M1869.5,1025 L1879.8,1031 L1890,1025"/><path d="M1879.8,1008.2 V1020 M1876.5,1016.8 L1879.8,1020 L1883.1,1016.8"/></svg>
<div class="t" style="left:1485.10px;width:400px;text-align:center;top:1047.14px;font-size:12px;color:#727272;">Slice</div>
<div class="t" style="left:1544.60px;width:400px;text-align:center;top:1047.14px;font-size:12px;color:#727272;">Weld</div>
<div class="t" style="left:1609.40px;width:400px;text-align:center;top:1047.14px;font-size:12px;color:#727272;">Attach</div>
<div class="t" style="left:1679.60px;width:400px;text-align:center;top:1047.14px;font-size:12px;color:#727272;">Flatten</div>
<svg style="left:0;top:0" width="1920" height="1080" viewBox="0 0 1920 1080"><path d="M1640,231.5 L1648,231.5 L1644,226.5 Z" fill="#a8a8a8"/><rect x="1635.5" y="237.8" width="18.5" height="48" fill="#c1c1c1"/><path d="M1640,1033.5 L1648,1033.5 L1644,1038.5 Z" fill="#505050"/><path d="M136,1054 L136,1062 L131,1058 Z" fill="#a8a8a8"/><rect x="144" y="1049" width="164.5" height="18.5" fill="#c1c1c1"/><path d="M1620,1054 L1620,1062 L1625,1058 Z" fill="#505050"/><rect x="128" y="988" width="104" height="49" fill="#f4f4f4" opacity="0.55"/><circle cx="146.3" cy="1014" r="12.4" fill="none" stroke="#dadada" stroke-width="1.3"/><path d="M140.5,1014 H152" stroke="#dadada" stroke-width="1.3"/><circle cx="213.6" cy="1014" r="12.4" fill="none" stroke="#dadada" stroke-width="1.3"/><path d="M208,1014 H219.2 M213.6,1008.4 V1019.6" stroke="#dadada" stroke-width="1.3"/><text x="165.5" y="1021" font-family="Liberation Sans" font-size="15" font-style="italic" fill="#e0e0e0">75%</text></svg>
<svg style="left:0;top:0" width="1920" height="1080" viewBox="0 0 1920 1080"><path d="M1557.2,392.5 L1557.8,389.8 L1558.4,387.1 L1559.1,384.4 L1559.8,381.6 L1560.6,378.9 L1561.4,376.2 L1562.2,373.5 L1563.1,370.8 L1564.0,368.1 L1565.0,365.5 L1566.0,362.8 L1567.1,360.2 L1568.3,357.7 L1569.4,355.1 L1570.6,352.6 L1571.9,350.2 L1573.2,347.8 L1574.6,345.4 L1576.0,343.1 L1577.4,340.8 L1578.9,338.6 L1580.5,336.5 L1582.0,334.4 L1583.7,332.4 L1585.4,330.4 L1587.1,328.5 L1588.9,326.7 L1590.7,325.0 L1592.5,323.4 L1594.5,321.8 L1596.4,320.3 L1598.4,318.9 L1600.5,317.6 L1602.6,316.4 L1604.8,315.2 L1607.0,314.2 L1609.2,313.2 L1611.6,312.4 L1614.0,311.6 L1616.7,310.9 L1618.7,310.2 L1620.5,309.6 L1622.4,309.0 L1624.2,308.5 L1626.0,307.9 L1627.9,307.3 L1629.7,306.8 L1631.5,306.3 L1633.3,305.7 L1635.1,305.2 L1637.0,304.7 L1638.8,304.2 L1640.6,303.7 L1642.4,303.2 L1644.1,302.7 L1645.9,302.2 L1647.7,301.7 L1649.5,301.3 L1651.2,300.8 L1653.0,300.4 L1654.7,300.0 L1656.5,299.6 L1658.2,299.2 L1659.9,298.8 L1661.7,298.4 L1663.4,298.0 L1665.1,297.6 L1666.8,297.3 L1668.4,297.0 L1670.1,296.6 L1671.8,296.3 L1673.4,296.0 L1675.0,295.8 L1676.7,295.6 L1678.3,295.5 L1679.9,295.4 L1681.5,295.3 L1683.1,295.2 L1684.6,295.1 L1686.2,295.0 L1685.8,287.0 L1684.2,287.1 L1682.6,287.2 L1680.9,287.3 L1679.3,287.5 L1677.6,287.6 L1675.9,287.8 L1674.2,288.0 L1672.5,288.1 L1670.8,288.2 L1669.0,288.3 L1667.3,288.5 L1665.5,288.6 L1663.7,288.8 L1661.9,288.9 L1660.1,289.1 L1658.3,289.4 L1656.5,289.6 L1654.7,289.8 L1652.8,290.1 L1651.0,290.4 L1649.2,290.6 L1647.3,290.9 L1645.4,291.3 L1643.6,291.6 L1641.7,292.0 L1639.8,292.3 L1637.9,292.7 L1636.0,293.1 L1634.1,293.5 L1632.2,294.0 L1630.3,294.4 L1628.4,294.9 L1626.5,295.4 L1624.6,295.9 L1622.7,296.4 L1620.8,296.9 L1618.9,297.5 L1617.0,298.0 L1615.1,298.6 L1613.3,299.1 L1610.5,299.9 L1607.6,300.8 L1604.7,301.9 L1602.0,303.1 L1599.3,304.4 L1596.6,305.8 L1594.1,307.4 L1591.6,309.0 L1589.3,310.7 L1587.0,312.6 L1584.7,314.5 L1582.6,316.5 L1580.6,318.6 L1578.6,320.8 L1576.7,323.0 L1574.9,325.4 L1573.1,327.7 L1571.5,330.2 L1569.9,332.7 L1568.3,335.2 L1566.9,337.8 L1565.5,340.4 L1564.2,343.1 L1562.9,345.8 L1561.7,348.5 L1560.6,351.3 L1559.5,354.1 L1558.5,356.9 L1557.6,359.8 L1556.7,362.7 L1555.9,365.5 L1555.1,368.4 L1554.4,371.3 L1553.7,374.2 L1553.1,377.1 L1552.5,380.0 L1552.0,382.9 L1551.6,385.8 L1551.2,388.6 L1550.8,391.5 Z" fill="#a6dc2b"/><path d="M1627.46,311.59 L1628.79,312.61 L1629.97,313.82 L1630.99,315.22 L1631.84,316.80 L1632.51,318.53 L1633.00,320.41 L1633.29,322.42 L1633.39,324.53 L1633.30,326.72 L1633.02,328.98 L1632.55,331.29 L1631.89,333.61 L1631.05,335.93 L1630.05,338.23 L1628.88,340.48 L1627.56,342.66 L1626.10,344.75 L1624.52,346.73 L1622.83,348.59 L1621.05,350.30 L1619.20,351.84 L1617.29,353.21 L1615.34,354.39 L1613.37,355.37 L1611.40,356.13 L1609.45,356.67 L1607.53,357.00 L1605.67,357.09 L1603.89,356.95 L1602.19,356.59 L1600.61,356.01 L1599.14,355.21 L1597.81,354.19 L1596.63,352.98 L1595.61,351.58 L1594.76,350.00 L1594.09,348.27 L1593.60,346.39 L1593.31,344.38 L1593.21,342.27 L1593.30,340.08 L1593.58,337.82 L1594.05,335.51 L1594.71,333.19 L1595.55,330.87 L1596.55,328.57 L1597.72,326.32 L1599.04,324.14 L1600.50,322.05 L1602.08,320.07 L1603.77,318.21 L1605.55,316.50 L1607.40,314.96 L1609.31,313.59 L1611.26,312.41 L1613.23,311.43 L1615.20,310.67 L1617.15,310.13 L1619.07,309.80 L1620.93,309.71 L1622.71,309.85 L1624.41,310.21 L1625.99,310.79 Z M1626.42,312.60 L1626.87,313.02 L1627.21,313.61 L1627.42,314.36 L1627.51,315.28 L1627.47,316.34 L1627.32,317.54 L1627.03,318.87 L1626.63,320.32 L1626.12,321.86 L1625.49,323.50 L1624.76,325.20 L1623.93,326.96 L1623.01,328.75 L1622.01,330.56 L1620.93,332.38 L1619.80,334.18 L1618.62,335.94 L1617.39,337.66 L1616.15,339.31 L1614.88,340.88 L1613.61,342.36 L1612.36,343.72 L1611.12,344.96 L1609.92,346.06 L1608.76,347.01 L1607.66,347.81 L1606.63,348.44 L1605.67,348.91 L1604.80,349.20 L1604.02,349.31 L1603.35,349.24 L1602.78,349.00 L1602.33,348.58 L1601.99,347.99 L1601.78,347.24 L1601.69,346.32 L1601.73,345.26 L1601.88,344.06 L1602.17,342.73 L1602.57,341.28 L1603.08,339.74 L1603.71,338.10 L1604.44,336.40 L1605.27,334.64 L1606.19,332.85 L1607.19,331.04 L1608.27,329.22 L1609.40,327.42 L1610.58,325.66 L1611.81,323.94 L1613.05,322.29 L1614.32,320.72 L1615.59,319.24 L1616.84,317.88 L1618.08,316.64 L1619.28,315.54 L1620.44,314.59 L1621.54,313.79 L1622.57,313.16 L1623.53,312.69 L1624.40,312.40 L1625.18,312.29 L1625.85,312.36 Z" fill="#a6dc2b" fill-rule="evenodd"/><path d="M1653,281.5 L1685,290.5 L1660,315.5" fill="none" stroke="#a6dc2b" stroke-width="8.5" stroke-linecap="round" stroke-linejoin="round"/><path d="M1484.7,985.7 L1486.4,984.4 L1488.2,983.2 L1489.9,982.1 L1491.6,980.9 L1493.4,979.7 L1495.1,978.6 L1496.9,977.4 L1498.7,976.3 L1500.4,975.2 L1502.2,974.1 L1504.0,973.0 L1505.8,972.0 L1507.6,971.0 L1509.4,970.0 L1511.2,969.0 L1513.1,968.0 L1514.9,967.1 L1516.7,966.2 L1518.6,965.4 L1520.4,964.5 L1522.2,963.7 L1524.1,962.9 L1525.9,962.2 L1527.8,961.5 L1529.6,960.8 L1531.5,960.2 L1533.4,959.6 L1535.2,959.1 L1537.1,958.5 L1539.0,958.1 L1540.9,957.6 L1542.7,957.2 L1544.6,956.9 L1546.5,956.6 L1548.4,956.3 L1550.3,956.1 L1552.2,956.0 L1554.1,955.8 L1556.1,955.8 L1557.4,955.7 L1559.7,956.2 L1562.5,956.7 L1565.2,957.3 L1567.9,958.0 L1570.5,958.6 L1573.2,959.3 L1575.8,960.0 L1578.4,960.7 L1581.0,961.5 L1583.6,962.3 L1586.1,963.1 L1588.6,963.9 L1591.1,964.7 L1593.6,965.6 L1596.0,966.5 L1598.5,967.4 L1600.9,968.3 L1603.2,969.3 L1605.6,970.2 L1607.9,971.2 L1610.2,972.2 L1612.4,973.2 L1614.7,974.2 L1616.9,975.3 L1619.1,976.3 L1621.2,977.3 L1623.3,978.4 L1625.4,979.5 L1627.5,980.6 L1629.5,981.6 L1631.5,982.7 L1633.5,983.8 L1635.4,984.9 L1637.3,986.0 L1639.2,987.2 L1641.0,988.3 L1642.8,989.5 L1644.5,990.6 L1646.2,991.8 L1647.8,993.0 L1652.2,987.0 L1650.5,985.8 L1648.8,984.5 L1647.0,983.3 L1645.2,982.1 L1643.4,980.8 L1641.6,979.5 L1639.7,978.2 L1637.8,976.9 L1635.8,975.6 L1633.9,974.3 L1631.8,973.0 L1629.8,971.8 L1627.7,970.5 L1625.6,969.3 L1623.4,968.0 L1621.2,966.8 L1619.0,965.6 L1616.7,964.4 L1614.4,963.2 L1612.1,962.0 L1609.7,960.9 L1607.3,959.8 L1604.9,958.7 L1602.5,957.6 L1600.0,956.5 L1597.4,955.5 L1594.9,954.5 L1592.3,953.5 L1589.7,952.6 L1587.0,951.6 L1584.4,950.8 L1581.7,949.9 L1578.9,949.1 L1576.2,948.3 L1573.4,947.5 L1570.6,946.8 L1567.7,946.1 L1564.9,945.5 L1562.0,944.9 L1558.6,944.3 L1555.7,944.3 L1553.5,944.4 L1551.3,944.6 L1549.1,944.8 L1546.9,945.1 L1544.7,945.5 L1542.5,945.9 L1540.4,946.4 L1538.3,946.9 L1536.1,947.5 L1534.1,948.1 L1532.0,948.8 L1529.9,949.5 L1527.9,950.3 L1525.9,951.1 L1523.9,952.0 L1521.9,952.9 L1520.0,953.8 L1518.0,954.8 L1516.1,955.9 L1514.2,956.9 L1512.3,958.0 L1510.5,959.1 L1508.6,960.3 L1506.8,961.4 L1505.0,962.6 L1503.2,963.9 L1501.4,965.1 L1499.6,966.4 L1497.9,967.7 L1496.2,969.0 L1494.5,970.3 L1492.8,971.6 L1491.1,973.0 L1489.4,974.4 L1487.8,975.7 L1486.1,977.1 L1484.5,978.5 L1482.9,979.9 L1481.3,981.3 Z" fill="#a6dc2b"/><path d="M1592.93,968.11 L1593.35,969.62 L1593.53,971.21 L1593.47,972.85 L1593.17,974.54 L1592.63,976.24 L1591.85,977.96 L1590.86,979.66 L1589.65,981.34 L1588.23,982.98 L1586.62,984.56 L1584.84,986.07 L1582.91,987.49 L1580.83,988.81 L1578.63,990.01 L1576.34,991.09 L1573.97,992.04 L1571.55,992.83 L1569.10,993.48 L1566.64,993.97 L1564.21,994.29 L1561.81,994.45 L1559.48,994.44 L1557.23,994.26 L1555.09,993.92 L1553.09,993.41 L1551.23,992.75 L1549.53,991.93 L1548.02,990.97 L1546.71,989.87 L1545.61,988.65 L1544.72,987.32 L1544.07,985.89 L1543.65,984.38 L1543.47,982.79 L1543.53,981.15 L1543.83,979.46 L1544.37,977.76 L1545.15,976.04 L1546.14,974.34 L1547.35,972.66 L1548.77,971.02 L1550.38,969.44 L1552.16,967.93 L1554.09,966.51 L1556.17,965.19 L1558.37,963.99 L1560.66,962.91 L1563.03,961.96 L1565.45,961.17 L1567.90,960.52 L1570.36,960.03 L1572.79,959.71 L1575.19,959.55 L1577.52,959.56 L1579.77,959.74 L1581.91,960.08 L1583.91,960.59 L1585.77,961.25 L1587.47,962.07 L1588.98,963.03 L1590.29,964.13 L1591.39,965.35 L1592.28,966.68 Z M1589.20,969.65 L1589.31,970.23 L1589.22,970.89 L1588.93,971.60 L1588.45,972.36 L1587.79,973.17 L1586.94,974.02 L1585.92,974.89 L1584.74,975.79 L1583.40,976.69 L1581.93,977.60 L1580.33,978.51 L1578.63,979.39 L1576.83,980.26 L1574.95,981.10 L1573.02,981.89 L1571.05,982.64 L1569.06,983.33 L1567.07,983.96 L1565.10,984.53 L1563.16,985.02 L1561.29,985.44 L1559.48,985.77 L1557.77,986.02 L1556.17,986.19 L1554.68,986.26 L1553.34,986.25 L1552.15,986.14 L1551.12,985.95 L1550.26,985.67 L1549.59,985.31 L1549.10,984.87 L1548.80,984.35 L1548.69,983.77 L1548.78,983.11 L1549.07,982.40 L1549.55,981.64 L1550.21,980.83 L1551.06,979.98 L1552.08,979.11 L1553.26,978.21 L1554.60,977.31 L1556.07,976.40 L1557.67,975.49 L1559.37,974.61 L1561.17,973.74 L1563.05,972.90 L1564.98,972.11 L1566.95,971.36 L1568.94,970.67 L1570.93,970.04 L1572.90,969.47 L1574.84,968.98 L1576.71,968.56 L1578.52,968.23 L1580.23,967.98 L1581.83,967.81 L1583.32,967.74 L1584.66,967.75 L1585.85,967.86 L1586.88,968.05 L1587.74,968.33 L1588.41,968.69 L1588.90,969.13 Z" fill="#a6dc2b" fill-rule="evenodd"/><path d="M1631.5,965 L1650,990 L1614.5,995.5" fill="none" stroke="#a6dc2b" stroke-width="9" stroke-linecap="round" stroke-linejoin="round"/></svg>
</body></html>
